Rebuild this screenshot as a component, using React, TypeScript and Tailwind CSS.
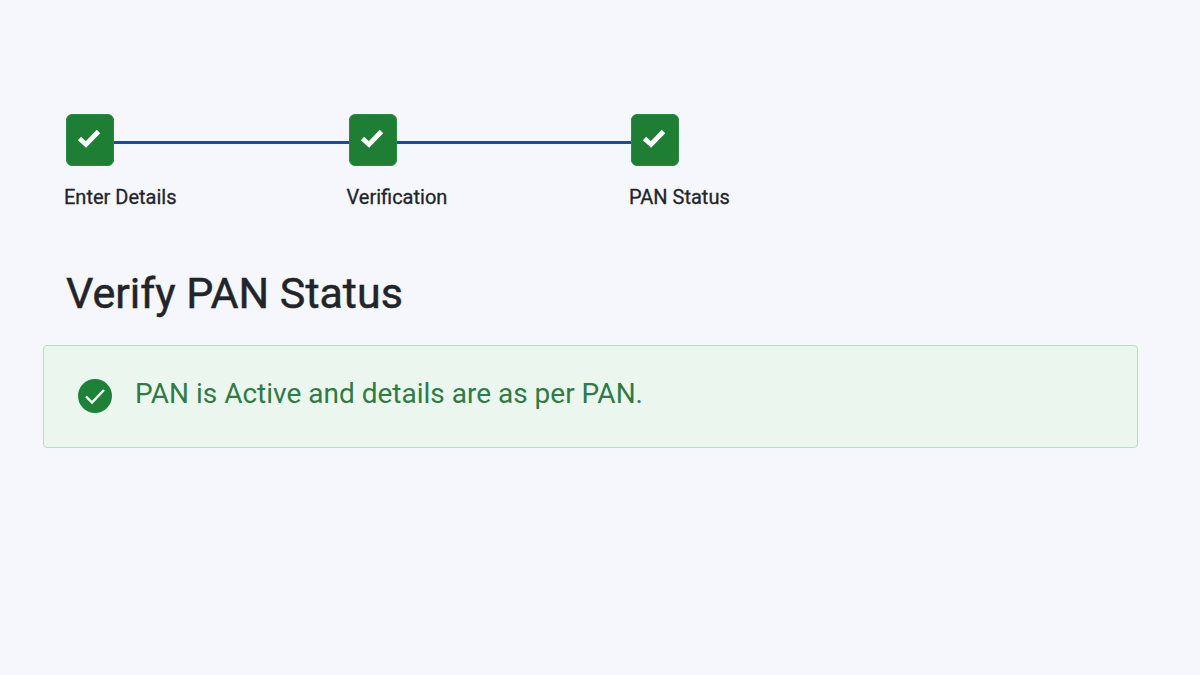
const steps = ["Enter Details", "Verification", "PAN Status"]

function StepBox() {
    return (
        <div className="w-[48px] h-[52px] rounded-[6px] bg-[#1e7e34] border border-[#2a8a3f] flex items-center justify-center shrink-0">
            <svg width="26" height="22" viewBox="0 0 26 22" className="-mt-[5px] -ml-[2px]">
                <path d="M3.5 11.5 L10 17.5 L22.5 4.5" fill="none" stroke="#fff" strokeWidth="4.8" />
            </svg>
        </div>
    )
}

export default function App() {
    return (
        <div className="w-[1200px] h-[675px] bg-[#f6f7fc] overflow-hidden pt-[114px] font-['Roboto',sans-serif]">
            <div className="flex pl-[65px]">
                {steps.map((step, index) => (
                    <div key={step} className={index < 2 ? "w-[282.5px]" : "w-[110px]"}>
                        <div className="flex pl-[1px] -mr-[1px]">
                            <StepBox />
                            {index < 2 && <div className="h-[3px] flex-1 bg-[#0a4fa8] mt-[27px]" />}
                        </div>
                        <div className="mt-[19px] -ml-[1px] text-[20px] leading-[24px] font-normal text-[#212529] whitespace-nowrap [-webkit-text-stroke:0.3px_#212529]">{step}</div>
                    </div>
                ))}
            </div>
            <h1 className="ml-[66px] mt-[58px] text-[43px] leading-[52px] font-normal text-[#212529] [-webkit-text-stroke:0.5px_#212529]">Verify PAN Status</h1>
            <div className="ml-[43px] mt-[26px] w-[1094.5px] h-[103px] rounded-[4px] border border-[#bdd9c7] bg-[#ebf6ef] flex items-center pl-[34px] pb-[6px]">
                <svg width="34" height="34" viewBox="0 0 34 34" className="shrink-0 mt-[4px]">
                    <circle cx="17" cy="17" r="17" fill="#1e8138" />
                    <path d="M8 17.5 L14 23.5 L26 11" fill="none" stroke="#fff" strokeWidth="2.4" />
                </svg>
                <span className="ml-[23px] text-[28px] leading-[36px] text-[#2f7a45]">PAN is Active and details are as per PAN.</span>
            </div>
        </div>
    )
}
